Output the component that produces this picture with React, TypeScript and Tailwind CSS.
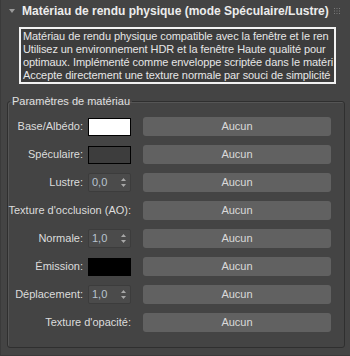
import React from 'react';

type Row = {
  label: string;
  kind: 'white' | 'dark' | 'black' | 'spin' | 'none';
  value?: string;
};

const rows: Row[] = [
  { label: 'Base/Albédo:', kind: 'white' },
  { label: 'Spéculaire:', kind: 'dark' },
  { label: 'Lustre:', kind: 'spin', value: '0,0' },
  { label: "Texture d'occlusion (AO):", kind: 'none' },
  { label: 'Normale:', kind: 'spin', value: '1,0' },
  { label: 'Émission:', kind: 'black' },
  { label: 'Déplacement:', kind: 'spin', value: '1,0' },
  { label: "Texture d'opacité:", kind: 'none' },
];

// lines as they show in the box (the box clips them on the right)
const descLines = [
  'Matériau de rendu physique compatible avec la fenêtre et le ren',
  'Utilisez un environnement HDR et la fenêtre Haute qualité pour',
  'optimaux. Implémenté comme enveloppe scriptée dans le matéri',
  'Accepte directement une texture normale par souci de simplicité',
];

const Spinner: React.FC<{ value: string }> = ({ value }) => (
  <div className="w-[43px] h-[19px] bg-[#4b4b4b] border border-[#3c3c3c] rounded-[2px] flex items-center justify-between pl-[3px] pr-[4px]">
    <span className="text-[#b9c3cf]">{value}</span>
    <svg width="5" height="9" viewBox="0 0 5 9">
      <path d="M2.5 0 L5 3 L0 3 Z" fill="#a8a8a8" />
      <path d="M0 6 L5 6 L2.5 9 Z" fill="#a8a8a8" />
    </svg>
  </div>
);

const Control: React.FC<{ row: Row }> = ({ row }) => {
  switch (row.kind) {
    case 'white':
      return <div className="w-[43px] h-[18px] bg-white border border-black" />;
    case 'dark':
      return <div className="w-[43px] h-[18px] bg-[#3d3d3d] border border-black" />;
    case 'black':
      return <div className="w-[43px] h-[18px] bg-black border border-black" />;
    case 'spin':
      return <Spinner value={row.value ?? ''} />;
    default:
      return null;
  }
};

export default function App() {
  return (
    <div
      className="w-[350px] h-[356px] bg-[#444444] text-[#dcdcdc] text-[11px] overflow-hidden"
      style={{ fontFamily: '"Liberation Sans", Arial, sans-serif' }}
    >
      <div className="h-full border-l border-b border-[#3a3a3a] pr-[4px]">
        {/* title bar */}
        <div className="h-[22px] flex items-center pl-[8px] pr-[6px]">
          <svg width="6" height="4" viewBox="0 0 6 4" className="mr-[7px]">
            <path d="M0 0 L6 0 L3 4 Z" fill="#9a9a9a" />
          </svg>
          <span className="font-bold text-[12px] text-[#ececec] whitespace-nowrap">
            Matériau de rendu physique (mode Spéculaire/Lustre)
          </span>
          <svg width="6" height="6" viewBox="0 0 6 6" className="ml-auto">
            {[0, 1, 2].map((r) =>
              [0, 1, 2].map((c) => (
                <rect key={`${r}-${c}`} x={c * 2.5} y={r * 2.5} width="1" height="1" fill="#7a7a7a" />
              ))
            )}
          </svg>
        </div>

        {/* description */}
        <div className="ml-[18px] mt-[5px] w-[317px] h-[57px] border-[2px] border-[#f2f2f2] bg-[#3c3c3c] px-[2px] py-[1px] overflow-hidden leading-[13px] tracking-[-0.08px] text-[#e6e6e6] whitespace-nowrap">
          {descLines.map((line) => (
            <div key={line}>{line}</div>
          ))}
        </div>

        {/* parameters group */}
        <fieldset className="ml-[6px] mt-[10px] w-[338px] h-[254px] border border-[#2f2f2f] rounded-[3px] shadow-[inset_1px_1px_0_#555]">
          <legend className="ml-[2px] px-[2px] text-[#e0e0e0] leading-[14px]">Paramètres de matériau</legend>
          <div className="flex flex-col gap-[9px] pt-[9px]">
            {rows.map((row) => (
              <div key={row.label} className="flex items-center h-[19px]">
                <div className="w-[123px] flex items-center justify-end gap-[5px] whitespace-nowrap">
                  <span>{row.label}</span>
                  <Control row={row} />
                </div>
                <button className="ml-[12px] w-[188px] h-[19px] bg-[#616161] rounded-[3px] text-[#dadada]">
                  Aucun
                </button>
              </div>
            ))}
          </div>
        </fieldset>
      </div>
    </div>
  );
}
